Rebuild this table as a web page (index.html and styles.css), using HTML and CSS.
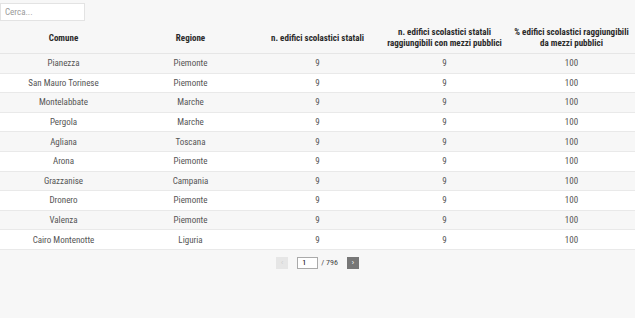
FILE: index.html
```html
<!DOCTYPE html>
<html lang="it">
<head>
<meta charset="utf-8">
<link rel="stylesheet" href="styles.css">
</head>
<body>
<div class="search-wrap"><input class="search" type="text" placeholder="Cerca..."></div>
<table class="tbl">
<thead>
<tr>
<th>Comune</th>
<th>Regione</th>
<th>n. edifici scolastici statali</th>
<th>n. edifici scolastici statali<br>raggiungibili con mezzi pubblici</th>
<th>% edifici scolastici raggiungibili<br>da mezzi pubblici</th>
</tr>
</thead>
<tbody>
<tr><td>Pianezza</td><td>Piemonte</td><td>9</td><td>9</td><td>100</td></tr>
<tr><td>San Mauro Torinese</td><td>Piemonte</td><td>9</td><td>9</td><td>100</td></tr>
<tr><td>Montelabbate</td><td>Marche</td><td>9</td><td>9</td><td>100</td></tr>
<tr><td>Pergola</td><td>Marche</td><td>9</td><td>9</td><td>100</td></tr>
<tr><td>Agliana</td><td>Toscana</td><td>9</td><td>9</td><td>100</td></tr>
<tr><td>Arona</td><td>Piemonte</td><td>9</td><td>9</td><td>100</td></tr>
<tr><td>Grazzanise</td><td>Campania</td><td>9</td><td>9</td><td>100</td></tr>
<tr><td>Dronero</td><td>Piemonte</td><td>9</td><td>9</td><td>100</td></tr>
<tr><td>Valenza</td><td>Piemonte</td><td>9</td><td>9</td><td>100</td></tr>
<tr><td>Cairo Montenotte</td><td>Liguria</td><td>9</td><td>9</td><td>100</td></tr>
</tbody>
</table>
<div class="pager">
<button class="pbtn prev">‹</button>
<input class="page" type="text" value="1">
<span class="total">/ 796</span>
<button class="pbtn next">›</button>
</div>
</body>
</html>
```
FILE: styles.css
```css
html, body {
  margin: 0;
  padding: 0;
  background: #f7f7f7;
  font-family: "Roboto Condensed", "Liberation Sans Narrow", Roboto, sans-serif;
  font-stretch: condensed;
  color: #333;
}
.search-wrap {
  height: 20px;
}
.search {
  box-sizing: border-box;
  width: 85px;
  height: 18px;
  margin: 0;
  border: 1px solid #e3e3e3;
  background: #fff;
  padding: 0 4px;
  font: inherit;
  font-size: 9px;
  color: #333;
}
.search::placeholder { color: #999; }
.tbl {
  width: 635px;
  border-collapse: collapse;
  table-layout: fixed;
  font-size: 9px;
}
.tbl th {
  height: 30px;
  font-weight: 700;
  color: #2a2a2a;
  padding: 3px 4px 0;
  vertical-align: middle;
  line-height: 11px;
  border-bottom: 1px solid #e6e6e6;
}
.tbl td {
  height: 18.6px;
  text-align: center;
  color: #555;
  border-bottom: 1px solid #e9e9e9;
  padding: 0;
}
.tbl tbody tr:nth-child(odd) { background: #f7f7f7; }
.tbl tbody tr:nth-child(even) { background: #fff; }
.pager {
  display: flex;
  justify-content: center;
  align-items: center;
  gap: 0;
  margin-top: 7px;
  font-size: 8px;
  color: #444;
}
.pbtn {
  width: 12px;
  height: 12px;
  padding: 0;
  border: 0;
  font-size: 7px;
  line-height: 12px;
  color: #fff;
}
.prev { background: #e6e6e6; color: #cfcfcf; margin-right: 9px; }
.next { background: #777; margin-left: 9px; }
.page {
  box-sizing: border-box;
  width: 21px;
  height: 12px;
  border: 1px solid #aaa;
  background: #fff;
  padding: 0 4px;
  font: inherit;
  font-size: 8px;
  margin-right: 3px;
}
```
